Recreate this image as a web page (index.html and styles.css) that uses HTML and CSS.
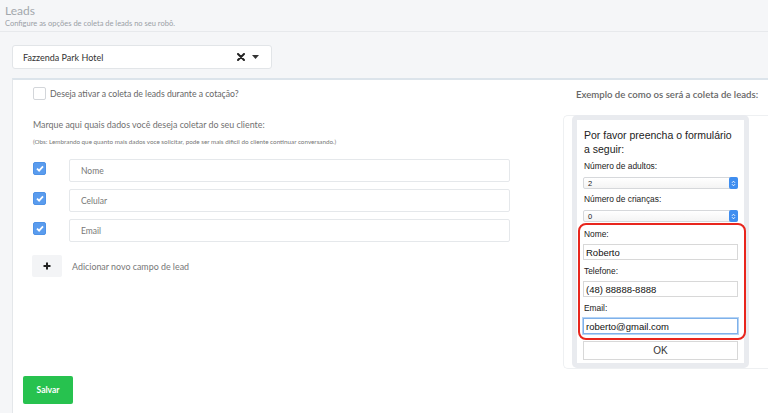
FILE: index.html
```html
<!DOCTYPE html>
<html lang="pt-BR">
<head>
<meta charset="utf-8">
<title>Leads</title>
<link rel="stylesheet" href="styles.css">
</head>
<body>
<header class="page-header">
  <div class="page-title">Leads</div>
  <div class="page-subtitle">Configure as opções de coleta de leads no seu robô.</div>
</header>

<div class="toolbar">
  <div class="hotel-select">
    <span class="hotel-name">Fazzenda Park Hotel</span>
    <span class="select-icons">
      <svg class="clear-icon" width="8" height="8" viewBox="0 0 8 8"><path d="M1 1 L7 7 M7 1 L1 7" stroke="#222" stroke-width="2" stroke-linecap="round"/></svg>
      <svg class="caret-icon" width="7" height="4" viewBox="0 0 7 4"><path d="M0 0 H7 L3.5 4 Z" fill="#333"/></svg>
    </span>
  </div>
</div>

<main class="card">
  <section class="left-col">
    <div class="form-area">
      <label class="enable-row">
        <span class="cb"></span>
        <span>Deseja ativar a coleta de leads durante a cotação?</span>
      </label>
      <p class="section-label">Marque aqui quais dados você deseja coletar do seu cliente:</p>
      <p class="note">(Obs: Lembrando que quanto mais dados voce solicitar, pode ser mais dificil do cliente continuar conversando.)</p>

      <div class="field-list">
        <div class="field-row">
          <span class="cb checked"><svg width="8" height="7" viewBox="0 0 8 7"><path d="M1 3.6 L3.1 5.6 L7 1.4" stroke="#fff" stroke-width="1.8" fill="none"/></svg></span>
          <div class="field-input">Nome</div>
        </div>
        <div class="field-row">
          <span class="cb checked"><svg width="8" height="7" viewBox="0 0 8 7"><path d="M1 3.6 L3.1 5.6 L7 1.4" stroke="#fff" stroke-width="1.8" fill="none"/></svg></span>
          <div class="field-input">Celular</div>
        </div>
        <div class="field-row">
          <span class="cb checked"><svg width="8" height="7" viewBox="0 0 8 7"><path d="M1 3.6 L3.1 5.6 L7 1.4" stroke="#fff" stroke-width="1.8" fill="none"/></svg></span>
          <div class="field-input">Email</div>
        </div>
      </div>

      <div class="add-row">
        <span class="add-btn"><svg width="8" height="8" viewBox="0 0 8 8"><path d="M4 0.5 V7.5 M0.5 4 H7.5" stroke="#222" stroke-width="2"/></svg></span>
        <span class="add-label">Adicionar novo campo de lead</span>
      </div>
    </div>
    <button class="save-btn">Salvar</button>
  </section>

  <aside class="right-col">
    <div class="example-title">Exemplo de como os será a coleta de leads:</div>
    <div class="preview-frame">
      <div class="phone">
        <div class="panel">
          <div class="panel-title">Por favor preencha o formulário a seguir:</div>
          <div class="p-label">Número de adultos:</div>
          <div class="p-select"><span>2</span><span class="stepper"><svg width="5" height="7" viewBox="0 0 5 7"><path d="M1 2.8 L2.5 1.2 L4 2.8 M1 4.2 L2.5 5.8 L4 4.2" stroke="#fff" stroke-width="0.9" fill="none"/></svg></span></div>
          <div class="p-label">Número de crianças:</div>
          <div class="p-select"><span>0</span><span class="stepper"><svg width="5" height="7" viewBox="0 0 5 7"><path d="M1 2.8 L2.5 1.2 L4 2.8 M1 4.2 L2.5 5.8 L4 4.2" stroke="#fff" stroke-width="0.9" fill="none"/></svg></span></div>
          <div class="highlight">
            <div class="p-label">Nome:</div>
            <div class="p-input">Roberto</div>
            <div class="p-label">Telefone:</div>
            <div class="p-input">(48) 88888-8888</div>
            <div class="p-label">Email:</div>
            <div class="p-input focused">roberto@gmail.com</div>
          </div>
          <div class="ok-btn">OK</div>
        </div>
      </div>
    </div>
  </aside>
</main>
</body>
</html>
```
FILE: styles.css
```css
* { box-sizing: border-box; }

html, body { height: 100%; }

body {
  margin: 0;
  background: #f5f6f8;
  font-family: Lato, "Open Sans", sans-serif;
  color: #666;
  overflow: hidden;
}

.page-header {
  height: 32px;
  padding: 3px 5px 0;
  border-bottom: 1px solid #e7e9ec;
}

.page-title {
  font-size: 12px;
  line-height: 15px;
  color: #a3a8ad;
}

.page-subtitle {
  margin-top: 1px;
  font-size: 7.5px;
  line-height: 10px;
  color: #9aa0a6;
}

.toolbar {
  padding: 13px 12px 0;
}

.hotel-select {
  width: 260px;
  height: 24px;
  background: #fff;
  border: 1px solid #e2e5e8;
  border-radius: 3px;
  display: flex;
  align-items: center;
  justify-content: space-between;
  padding: 0 12px 0 10px;
}

.hotel-name {
  font-size: 9px;
  color: #333;
}

.select-icons {
  display: flex;
  align-items: center;
  gap: 7px;
}

.card {
  margin: 9px 0 0 12px;
  background: #fff;
  border-top: 2px solid #dce4eb;
  border-left: 1px solid #e4e7ea;
  display: flex;
  height: 335px;
}

.left-col {
  width: 550px;
  padding: 6px 0 0 10px;
}

.form-area {
  padding-left: 10px;
}

.enable-row {
  display: flex;
  align-items: center;
  gap: 4px;
  font-size: 8.7px;
  color: #666;
  height: 14px;
}

.cb {
  width: 13px;
  height: 13px;
  border: 1px solid #d3d6da;
  border-radius: 2px;
  background: #fff;
  flex: none;
  display: flex;
  align-items: center;
  justify-content: center;
}

.cb.checked {
  background: #5a9cee;
  border-color: #4f92e6;
}

.section-label {
  margin: 18px 0 0;
  font-size: 8.9px;
  line-height: 14px;
  color: #707070;
}

.note {
  margin: 6px 0 0;
  font-size: 6.3px;
  line-height: 8px;
  color: #777;
}

.field-list {
  margin-top: 13px;
  display: flex;
  flex-direction: column;
  gap: 7px;
}

.field-row {
  display: flex;
  align-items: center;
  gap: 23px;
}

.field-row .cb {
  margin-top: -4px;
}

.field-input {
  width: 441px;
  height: 23px;
  border: 1px solid #e5e8eb;
  border-radius: 2px;
  padding-left: 11px;
  display: flex;
  align-items: center;
  font-size: 8.5px;
  color: #777;
}

.add-row {
  margin-top: 13px;
  display: flex;
  align-items: center;
  gap: 10px;
}

.add-btn {
  width: 30px;
  height: 22px;
  margin-left: -1px;
  background: #f3f4f6;
  border-radius: 2px;
  display: flex;
  align-items: center;
  justify-content: center;
}

.add-label {
  font-size: 8.9px;
  color: #777;
}

.save-btn {
  margin-top: 99px;
  width: 50px;
  height: 28px;
  border: none;
  border-radius: 2px;
  background: #27c24f;
  color: #fff;
  font-family: Lato, sans-serif;
  font-weight: 700;
  font-size: 8.5px;
  padding: 0;
}

.right-col {
  flex: 1;
  padding-top: 9px;
}

.example-title {
  padding-left: 13px;
  font-size: 9.6px;
  line-height: 12px;
  color: #666;
  font-weight: 600;
}

.preview-frame {
  margin-top: 14px;
  height: 254px;
  border: 1px solid #eef0f2;
  border-right: none;
  border-radius: 5px 0 0 5px;
  padding-left: 8px;
}

.phone {
  width: 177px;
  height: 253px;
  margin-top: -1px;
  background: #e9ebef;
  border-radius: 5px;
  padding: 5px 5px 5px 5px;
}

.panel {
  background: #fff;
  height: 243px;
  padding: 8px 6px 0;
  font-family: "Liberation Sans", Arial, sans-serif;
  color: #222;
}

.panel-title {
  font-size: 10.5px;
  line-height: 14px;
  padding-left: 1px;
}

.p-label {
  font-size: 8.4px;
  line-height: 12px;
  margin-top: 4px;
  padding-left: 1px;
  color: #222;
}

.p-select {
  margin-top: 5px;
  height: 12px;
  border: 1px solid #d6d8db;
  border-radius: 2px;
  background: linear-gradient(#fff, #f4f4f4);
  display: flex;
  justify-content: space-between;
  align-items: center;
  font-size: 7.5px;
  padding-left: 4px;
}

.stepper {
  width: 9px;
  height: 12px;
  margin-right: -1px;
  background: #3f8ef0;
  border-radius: 2px;
  display: flex;
  align-items: center;
  justify-content: center;
}

.highlight {
  margin: 1px -8px 0 -5px;
  border: 2px solid #e8261d;
  border-radius: 8px;
  padding: 0 6px 4px 3px;
}

.highlight .p-label {
  margin-top: 3px;
}

.highlight .p-label + .p-input { margin-top: 4px; }

.p-input {
  height: 16px;
  border: 1px solid #d8d8d8;
  font-size: 9.5px;
  padding-left: 2px;
  display: flex;
  align-items: center;
  color: #111;
}

.p-input + .p-label { margin-top: 5px; }

.p-input.focused {
  border: 1px solid #7fb1ea;
  box-shadow: 0 0 0 1px #b4d3f5;
}

.ok-btn {
  margin-top: 1px;
  height: 19px;
  border: 1px solid #d8d8d8;
  display: flex;
  align-items: center;
  justify-content: center;
  font-size: 10px;
  color: #333;
}
```
